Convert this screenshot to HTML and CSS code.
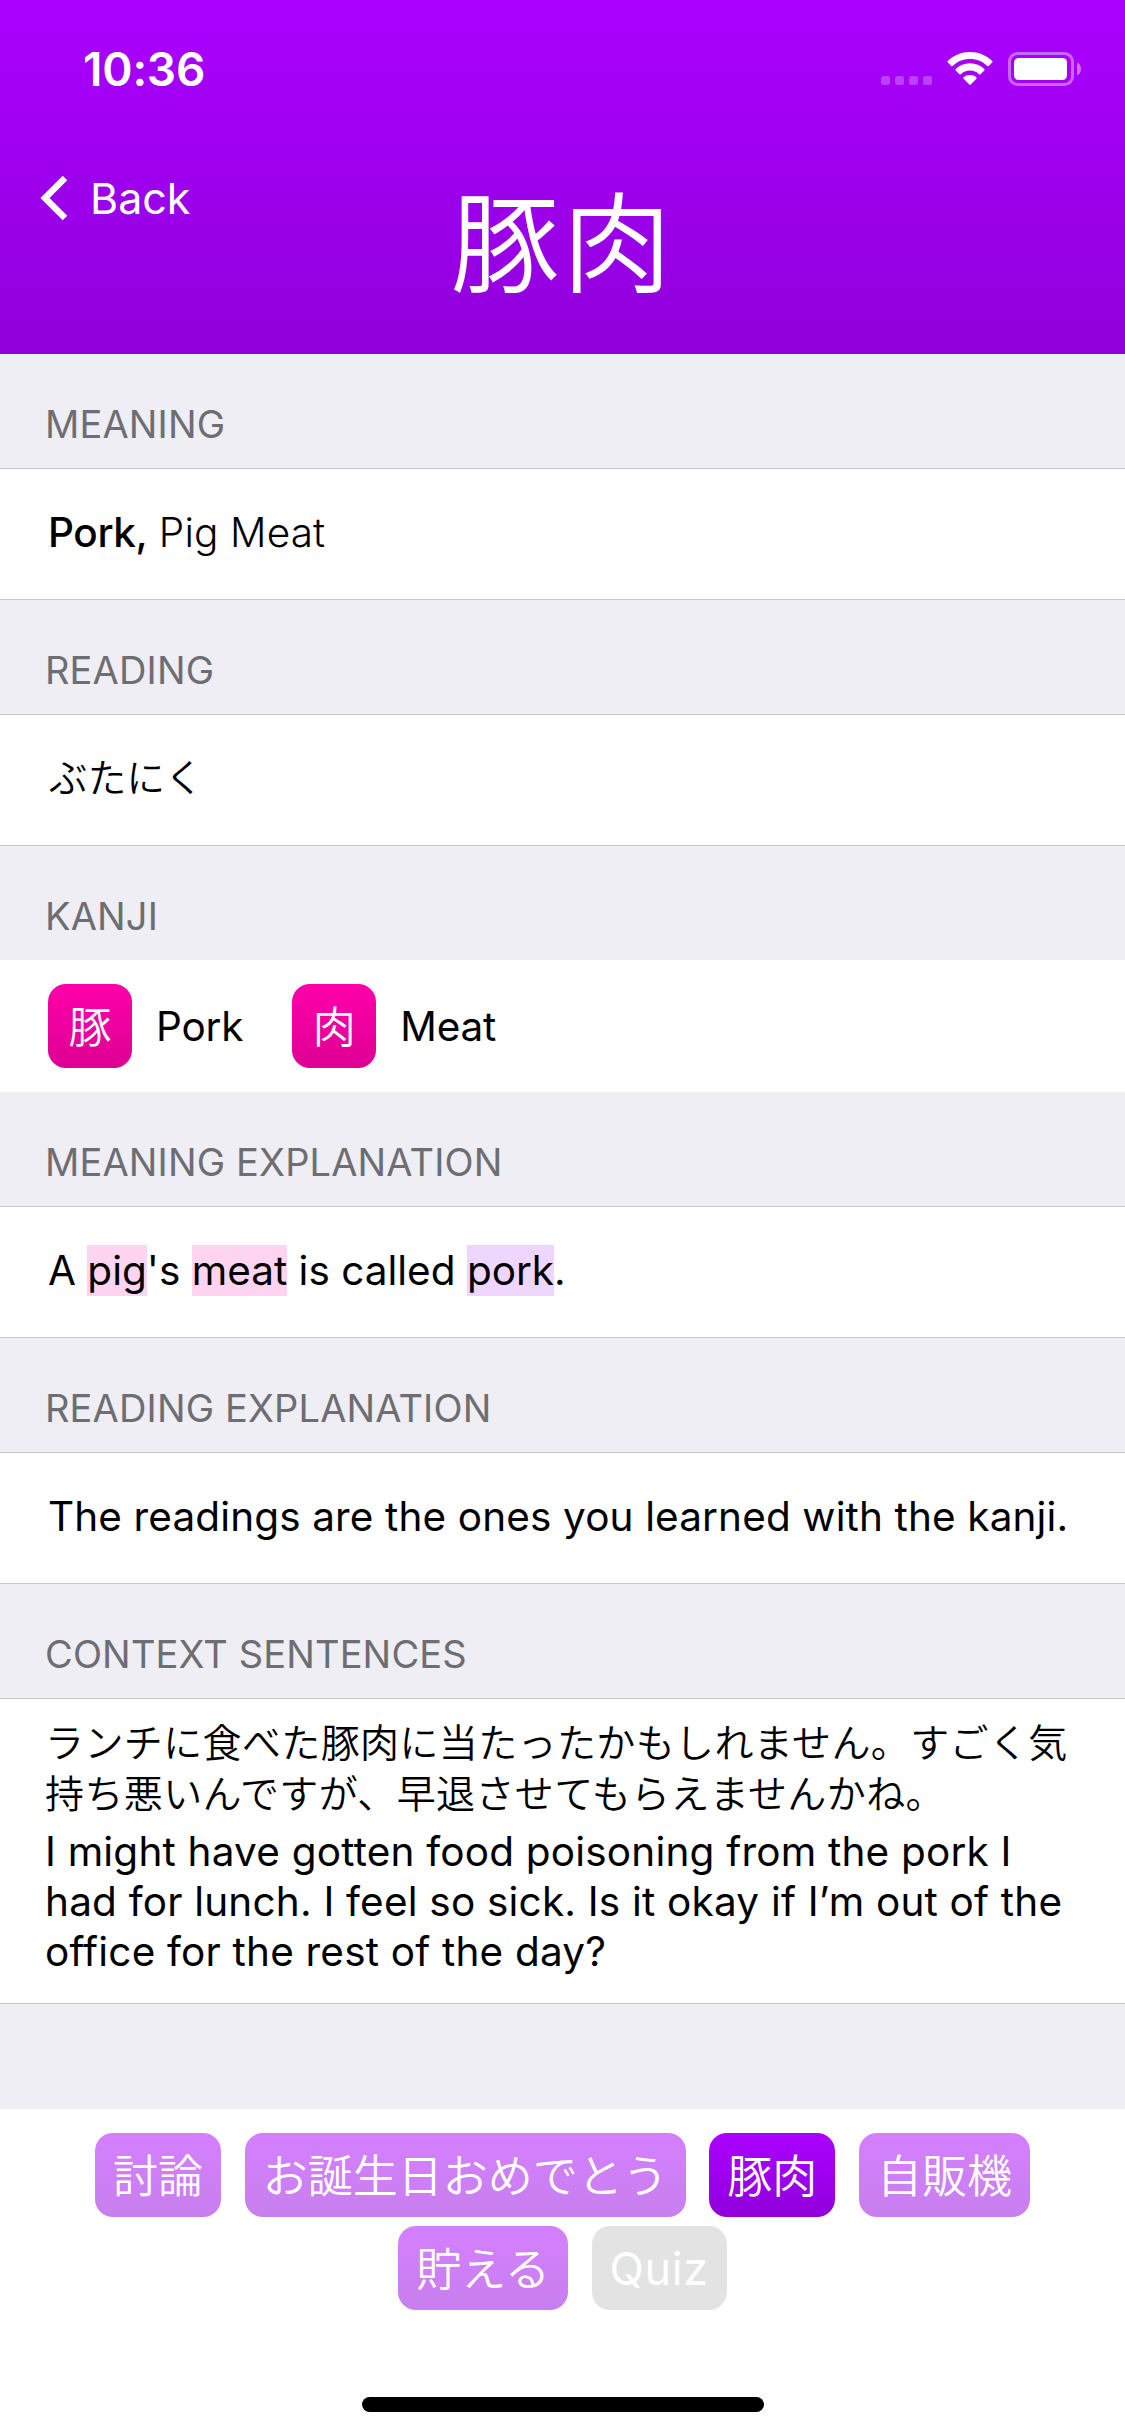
FILE: index.html
```html
<!DOCTYPE html>
<html lang="ja">
<head>
<meta charset="utf-8">
<title>豚肉</title>
<link rel="stylesheet" href="styles.css">
</head>
<body>
<div class="screen">
  <header class="hero">
    <div class="status">
      <span class="status-time">10:36</span>
      <svg class="status-icons" width="200" height="34" viewBox="0 0 200 34" fill="#fff">
        <g fill-opacity=".25">
          <rect x="0" y="24" width="9" height="9" rx="2.5"/>
          <rect x="14" y="24" width="9" height="9" rx="2.5"/>
          <rect x="28" y="24" width="9" height="9" rx="2.5"/>
          <rect x="42" y="24" width="9" height="9" rx="2.5"/>
        </g>
        <path d="M89 0C80.300 0 72.500 3.400 66.700 8.900Q66 9.600 66.700 10.300L70.300 13.900Q71 14.500 71.700 13.900C76.200 9.700 82.200 7 89 7S101.800 9.700 106.300 13.900Q107 14.500 107.700 13.900L111.300 10.300Q112 9.600 111.300 8.900C105.500 3.400 97.700 0 89 0Z"/>
        <path d="M89 11.300C83.400 11.300 78.400 13.500 74.700 17Q74 17.700 74.700 18.400L78.500 22.200Q79.200 22.800 79.900 22.200C82.300 20 85.500 18.600 89 18.600S95.700 20 98.100 22.200Q98.800 22.800 99.500 22.200L103.300 18.400Q104 17.700 103.300 17C99.600 13.500 94.600 11.300 89 11.300Z"/>
        <path d="M89 23C86.500 23 84.300 23.900 82.600 25.300Q81.900 26 82.600 26.700L88.300 32.600Q89 33.200 89.700 32.600L95.400 26.700Q96.100 26 95.400 25.300C93.700 23.900 91.500 23 89 23Z"/>
        <rect x="128.500" y="1.500" width="63" height="31" rx="8" fill="none" stroke="#fff" stroke-width="3" stroke-opacity=".4"/>
        <rect x="133" y="6" width="53" height="22" rx="4.500"/>
        <path d="M196 10.500V23.500C198.500 22.400 200 20 200 17S198.500 11.600 196 10.500Z" fill-opacity=".45"/>
      </svg>
    </div>
    <div class="nav">
      <a class="back">
        <svg width="28" height="46" viewBox="0 0 28 46" fill="none" stroke="#fff" stroke-width="6.500"><path d="M25 3L5 23L25 43"/></svg>
        <span>Back</span>
      </a>
      <h1 class="title">豚肉</h1>
    </div>
  </header>

  <main class="list">
    <h2 class="label">MEANING</h2>
    <p class="row"><span class="primary">Pork,</span> <span class="light">Pig Meat</span></p>

    <h2 class="label">READING</h2>
    <p class="row row-kana">ぶたにく</p>

    <h2 class="label">KANJI</h2>
    <div class="kanji">
      <div class="kanji-item"><span class="tile">豚</span><span>Pork</span></div>
      <div class="kanji-item"><span class="tile">肉</span><span>Meat</span></div>
    </div>

    <h2 class="label">MEANING EXPLANATION</h2>
    <p class="row">A <mark class="hl-kanji">pig</mark>'s <mark class="hl-kanji">meat</mark> is called <mark class="hl-vocab">pork</mark>.</p>

    <h2 class="label">READING EXPLANATION</h2>
    <p class="row row-long">The readings are the ones you learned with the kanji.</p>

    <h2 class="label">CONTEXT SENTENCES</h2>
    <div class="context">
      <p class="context-ja">ランチに食べた豚肉に当たったかもしれません。すごく気<br>持ち悪いんですが、早退させてもらえませんかね。</p>
      <p class="context-en">I might have gotten food poisoning from the pork I<br>had for lunch. I feel so sick. Is it okay if I’m out of the<br>office for the rest of the day?</p>
    </div>
  </main>

  <footer class="queue">
    <div class="chips">
      <span class="chip">討論</span>
      <span class="chip">お誕生日おめでとう</span>
      <span class="chip chip-active">豚肉</span>
      <span class="chip">自販機</span>
      <span class="chip">貯える</span>
      <span class="chip chip-quiz">Quiz</span>
    </div>
    <div class="home-bar"></div>
  </footer>
</div>
</body>
</html>
```
FILE: styles.css
```css
* { box-sizing: border-box; }

body {
  margin: 0;
  font-family: Inter, "Noto Sans CJK JP", sans-serif;
  color: #000;
  background: #fff;
}

h1, h2, p { margin: 0; font-weight: 400; }

.screen {
  width: 1125px;
  height: 2436px;
  display: flex;
  flex-direction: column;
  overflow: hidden;
}

/* Header */
.hero {
  height: 354px;
  color: #fff;
  background: linear-gradient(#aa00ff, #9100db);
}

.status {
  height: 138px;
  padding: 0 44px 0 83px;
  display: flex;
  align-items: center;
  justify-content: space-between;
}

.status-time { font-size: 46px; font-weight: 600; line-height: 56px; letter-spacing: -.2px; }

.nav {
  height: 216px;
  display: grid;
  grid-template-columns: 1fr auto 1fr;
  align-items: start;
}

.back {
  height: 120px;
  padding-left: 40px;
  display: flex;
  align-items: center;
  gap: 22px;
  font-size: 43px;
  font-weight: 400;
}

.title {
  font: 350 109px/197px "Noto Sans CJK JP", sans-serif;
  letter-spacing: 3px;
}

/* Sections */
.list { height: 1755px; background: #efeef4; }

.label {
  height: 114px;
  padding: 45px 0 0 45px;
  font-size: 38px;
  line-height: 50px;
  letter-spacing: .15px;
  color: #6d6d72;
}

.row {
  height: 132px;
  padding: 38px 0 0 48px;
  border: solid #c8c7cc;
  border-width: 1px 0;
  background: #fff;
  font-size: 40.5px;
  line-height: 51px;
  white-space: nowrap;
}

.row-long { letter-spacing: .13px; }

.row-kana {
  padding: 35px 0 0 49px;
  font: 350 38.5px/51px "Noto Sans CJK JP", sans-serif;
  letter-spacing: .3px;
}

.primary { font-weight: 500; letter-spacing: -.4px; }
.light { font-weight: 300; letter-spacing: .15px; }

mark { padding: 1px 0; color: inherit; }
.hl-kanji { background: #ffd4f0; }
.hl-vocab { background: #efd6ff; }

.kanji {
  height: 132px;
  padding-left: 48px;
  display: flex;
  align-items: center;
  gap: 49px;
  background: #fff;
  font-size: 40.5px;
  letter-spacing: -.2px;
}

.kanji-item { display: flex; align-items: center; gap: 24px; }

.tile {
  width: 84px;
  height: 84px;
  padding-bottom: 4px;
  display: flex;
  align-items: center;
  justify-content: center;
  border-radius: 18px;
  background: linear-gradient(#ff00aa, #dd0093);
  color: #fff;
  font: 350 43px/1 "Noto Sans CJK JP", sans-serif;
}

.context {
  height: 306px;
  padding: 16px 0 0 45px;
  border: solid #c8c7cc;
  border-width: 1px 0;
  background: #fff;
  white-space: nowrap;
}

.context-ja {
  font: 350 39px/50.5px "Noto Sans CJK JP", sans-serif;
  letter-spacing: .38px;
}

.context-en {
  margin-top: 11px;
  font-size: 40.5px;
  line-height: 50px;
  letter-spacing: .2px;
}

/* Lesson queue */
.queue {
  flex: 1;
  padding-top: 24px;
  display: flex;
  flex-direction: column;
  align-items: center;
}

.chips {
  display: flex;
  flex-wrap: wrap;
  justify-content: center;
  gap: 9px 23.6px;
}

.chip {
  height: 84px;
  padding: 0 18px 4px;
  display: flex;
  align-items: center;
  border-radius: 18px;
  background: linear-gradient(#d47fff, #c87fed);
  color: #fff;
  font: 350 45px/1 "Noto Sans CJK JP", sans-serif;
}

.chip-active { background: linear-gradient(#aa00ff, #9100db); }

.chip-quiz {
  padding-bottom: 0;
  background: #e3e3e3;
  color: #fff;
  font: 400 45px/1 Inter, sans-serif;
  letter-spacing: .6px;
}

.home-bar {
  width: 402px;
  height: 15px;
  margin-top: 87px;
  border-radius: 8px;
  background: #000;
}
```
